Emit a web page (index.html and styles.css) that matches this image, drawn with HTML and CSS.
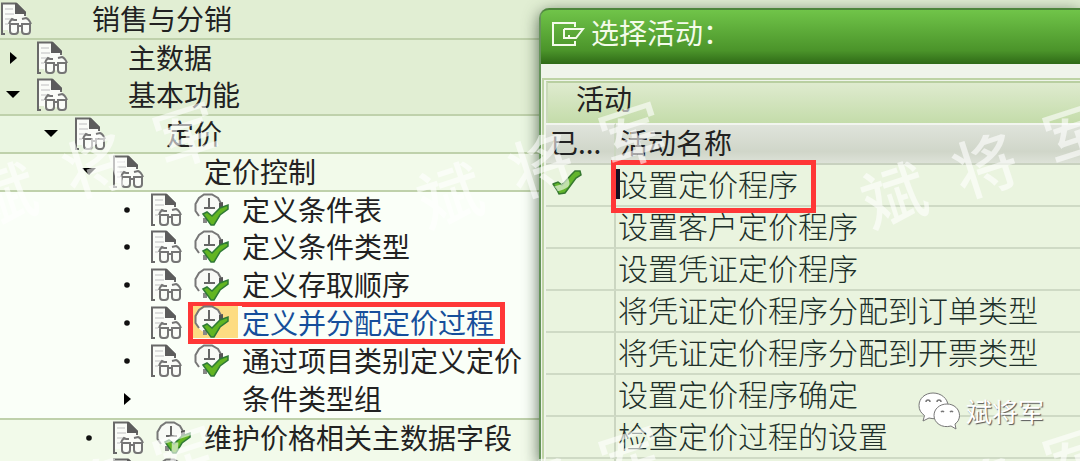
FILE: index.html
```html
<!DOCTYPE html>
<html lang="zh-CN">
<head>
<meta charset="utf-8">
<title>选择活动</title>
<link rel="stylesheet" href="styles.css">
</head>
<body>
<svg class="defs" aria-hidden="true">
  <symbol id="doc" viewBox="0 0 32 34">
    <path d="M2 1.500H16L25 11V28H2Z" fill="#fafcf8"/>
    <path d="M5 32H2V1.500H16L25 10.500V14" fill="none" stroke="#696969" stroke-width="2"/>
    <path d="M15 1V12H26V10L17 1Z" fill="#5c5c5c"/>
    <path d="M5 7H13M5 12H14M5 17H12M5 22H8" stroke="#d2d2d2" stroke-width="1.500"/>
    <path d="M9 21L14 15L20 18L26 14L31 20V31L27 33L20 29L11 33L8 29Z" fill="#fafcf8"/>
    <path d="M10 22V29Q10 32 13 32H15Q18 32 18 29V22ZM22 22H30V29Q30 32 27 32H25Q22 32 22 29ZM18 24H22M9 22Q10 19 12 17L14 18L17 18M22 17L26 16Q29 17 31 22" fill="none" stroke="#757575" stroke-width="2"/>
  </symbol>
  <symbol id="run" viewBox="0 0 36 34">
    <circle cx="15" cy="15" r="13" fill="#f8faf6"/>
    <path d="M5 23L1.500 18V11L5 5L10 1.500H18L24 5L28 12" fill="none" stroke="#777" stroke-width="2"/>
    <path d="M9 25H13V30H9Z" fill="#888"/>
    <path d="M15 5V15M10 15H21" stroke="#666" stroke-width="2"/>
    <path d="M25 10L29 9V15H25Z" fill="#555"/>
    <path d="M9 21L13 19L18 23L26 15L34 12L34 16L26 22L20 32H17Z" fill="#62b522" stroke="#2f7a36" stroke-width="1.500"/>
  </symbol>
  <symbol id="right" viewBox="0 0 14 14"><path d="M4 1L11 7L4 13Z" fill="#000"/></symbol>
  <symbol id="down" viewBox="0 0 14 14"><path d="M0 3H14L7 10Z" fill="#000"/></symbol>
  <symbol id="dot" viewBox="0 0 14 14"><circle cx="7" cy="7" r="2.800" fill="#111"/></symbol>
</svg>
<main class="screen">
  <ul class="tree">
    <li class="node root band-a"><svg class="doc"><use href="#doc"/></svg><span class="slot"></span><span>销售与分销</span></li>
    <li class="node band-a rule"><svg class="twisty"><use href="#right"/></svg><svg class="doc"><use href="#doc"/></svg><span class="slot"></span><span>主数据</span></li>
    <li class="node band-a"><svg class="twisty"><use href="#down"/></svg><svg class="doc"><use href="#doc"/></svg><span class="slot"></span><span>基本功能</span></li>
    <li class="node l2 band-b rule"><svg class="twisty"><use href="#down"/></svg><svg class="doc"><use href="#doc"/></svg><span class="slot"></span><span>定价</span></li>
    <li class="node l3 band-c rule"><svg class="twisty"><use href="#down"/></svg><svg class="doc"><use href="#doc"/></svg><span class="slot"></span><span>定价控制</span></li>
    <li class="node l4 rule"><svg class="twisty"><use href="#dot"/></svg><svg class="doc"><use href="#doc"/></svg><span class="slot"><svg class="run"><use href="#run"/></svg></span><span>定义条件表</span></li>
    <li class="node l4"><svg class="twisty"><use href="#dot"/></svg><svg class="doc"><use href="#doc"/></svg><span class="slot"><svg class="run"><use href="#run"/></svg></span><span>定义条件类型</span></li>
    <li class="node l4"><svg class="twisty"><use href="#dot"/></svg><svg class="doc"><use href="#doc"/></svg><span class="slot"><svg class="run"><use href="#run"/></svg></span><span>定义存取顺序</span></li>
    <li class="node l4"><svg class="twisty"><use href="#dot"/></svg><svg class="doc"><use href="#doc"/></svg><span class="marked"><span class="slot"><svg class="run"><use href="#run"/></svg></span><span>定义并分配定价过程</span></span></li>
    <li class="node l4"><svg class="twisty"><use href="#dot"/></svg><svg class="doc"><use href="#doc"/></svg><span class="slot"><svg class="run"><use href="#run"/></svg></span><span>通过项目类别定义定价</span></li>
    <li class="node l4"><svg class="twisty"><use href="#right"/></svg><span class="doc"></span><span class="slot"></span><span>条件类型组</span></li>
    <li class="node l3 band-c rule"><svg class="twisty"><use href="#dot"/></svg><svg class="doc"><use href="#doc"/></svg><span class="slot"><svg class="run"><use href="#run"/></svg></span><span>维护价格相关主数据字段</span></li>
    <li class="node l3 band-c"><svg class="twisty"><use href="#dot"/></svg><svg class="doc"><use href="#doc"/></svg><span class="slot"><svg class="run"><use href="#run"/></svg></span><span>定价协议价格</span></li>
  </ul>
  <section class="dialog" aria-labelledby="title">
    <header class="titlebar">
      <svg class="window-icon" viewBox="0 0 34 26"><path d="M24 6V2H2V24H24V20M13 8H32L25 17H18V14M13 8V17H19" fill="none" stroke="#f4fbea" stroke-width="2"/></svg>
      <h1 id="title">选择活动：</h1>
    </header>
    <div class="panel">
      <h2>活动</h2>
      <table>
        <thead><tr><th class="status" scope="col">已...</th><th scope="col">活动名称</th></tr></thead>
        <tbody>
          <tr><td class="status"><svg class="tick" viewBox="0 0 30 26"><path d="M1 14L6 12L10 15L19 5L23 1L28 1L29 5L24 8L13 23L7 24L5 20Z" fill="#62b52b" stroke="#35782f" stroke-width="1.500"/></svg></td><td><span class="chosen">设置定价程序</span></td></tr>
          <tr><td></td><td>设置客户定价程序</td></tr>
          <tr><td></td><td>设置凭证定价程序</td></tr>
          <tr><td></td><td>将凭证定价程序分配到订单类型</td></tr>
          <tr><td></td><td>将凭证定价程序分配到开票类型</td></tr>
          <tr><td></td><td>设置定价程序确定</td></tr>
          <tr><td></td><td>检查定价过程的设置</td></tr>
          <tr><td></td><td></td></tr>
        </tbody>
      </table>
    </div>
  </section>
  <div class="stamp s1" aria-hidden="true"><span>斌</span><span>将</span><span>军</span></div>
  <div class="stamp s2" aria-hidden="true"><span>斌</span><span>将</span><span>军</span></div>
  <div class="stamp s3" aria-hidden="true"><span>斌</span><span>将</span><span>军</span></div>
  <div class="stamp s4" aria-hidden="true"><span>斌</span><span>将</span><span>军</span></div>
  <div class="stamp s5" aria-hidden="true"><span>斌</span><span>将</span><span>军</span></div>
  <div class="stamp s6" aria-hidden="true"><span>斌</span><span>将</span><span>军</span></div>
  <div class="account">
    <svg class="wechat" viewBox="0 0 42 38">
      <g fill="#fff" stroke="#777" stroke-width="1">
        <path d="M15 1C7 1 1 6.500 1 13.500C1 18 3 21 6.500 23.500L5 29L11 26C22 29 30 22 30 14C30 6.500 23 1 15 1Z"/>
        <path d="M29 12C21.500 12 16 17 16 23.500C16 31 24 36.500 33 34L38 37L37 32C40 30 41.500 27 41.500 23.500C41.500 17 36 12 29 12Z"/>
      </g>
      <g fill="none" stroke="#777" stroke-width="1.500"><path d="M8 10a2 2 0 0 1 4 0M19 10a2 2 0 0 1 4 0M23 20a2 2 0 0 1 3 0M32 20a2 2 0 0 1 3 0"/></g>
    </svg>
    <span>斌将军</span>
  </div>
</main>
</body>
</html>
```
FILE: styles.css
```css
* { box-sizing: border-box; }
body {
  margin: 0;
  font-family: "Noto Sans CJK SC", sans-serif;
  font-size: 28px;
  font-weight: 400;
  color: #222;
}
.defs { position: absolute; width: 0; height: 0; }
.screen {
  position: relative;
  display: flex;
  height: 100vh;
  overflow: hidden;
  background: #e1eed3;
}
.tree {
  flex: 1;
  align-self: flex-start;
  margin: 0;
  padding: 0;
  list-style: none;
  background: #fafff8;
}
.node {
  display: flex;
  align-items: center;
  height: 38px;
  padding-left: 6px;
  line-height: 34px;
  white-space: nowrap;
}
.node > span:last-child { padding-bottom: 2px; }
.root { padding-left: 0; }
.l2 { padding-left: 44px; }
.l3 { padding-left: 82px; }
.l4 { padding-left: 120px; }
.band-a { background: #e1eed3; }
.band-b { background: #eaf6e1; }
.band-c { background: #f2faea; }
.rule { border-top: 2px solid #bfd1ab; }
.twisty { flex: none; width: 14px; height: 14px; margin-right: 16px; }
.doc { flex: none; width: 32px; height: 34px; margin-right: 10px; }
.slot { display: flex; align-items: center; flex: none; width: 50px; height: 34px; }
.run { width: 36px; height: 34px; margin-left: 2px; }
.marked {
  display: flex;
  align-items: center;
  height: 42px;
  margin-left: -4px;
  padding-right: 6px;
  border: 5px solid #ff3737;
  color: #164f9b;
}
.marked .slot { width: 49px; height: 32px; border-right: 4px solid #fafff8; background: #fddc82; }
.marked .run { margin-left: 1px; }

.dialog {
  flex: 1;
  z-index: 1;
  margin-top: 8px;
  border-left: 2px solid #65935a;
  border-radius: 10px 0 0 0;
  background: #eff4ea;
  box-shadow: 0 4px 16px rgba(40, 60, 40, .75);
}
.titlebar {
  display: flex;
  align-items: center;
  gap: 6px;
  height: 56px;
  padding: 0 10px 6px;
  border-top: 2px solid #4c853a;
  border-radius: 8px 0 0 0;
  background: linear-gradient(#70c449, #4b942a 75%, #2f6a17);
  color: #f4fbea;
}
.window-icon { width: 34px; height: 26px; }
h1, h2 { margin: 0; font-size: 28px; font-weight: 400; }
h1 { padding-bottom: 4px; line-height: 40px; }
.panel {
  margin: 14px 0 0 1px;
  border: solid #bdd3a4;
  border-width: 2px 0 0 2px;
  padding: 1px 0 0 2px;
}
h2 {
  height: 42px;
  padding-left: 28px;
  border-top: 2px solid #b9cfa1;
  border-left: 2px solid #c9dab8;
  background: linear-gradient(#dfebcf, #c4dcaa);
  line-height: 30px;
}
table { width: 100%; border-collapse: separate; border-spacing: 0; table-layout: fixed; }
th, td { height: 42px; padding: 0 0 4px 2px; text-align: left; line-height: 34px; font-weight: 400; white-space: nowrap; }
th { padding-left: 4px; border-top: 2px solid #f2f5ef; border-bottom: 2px solid #c8d1bf; background: linear-gradient(#dfe3db, #d0d6c9 70%, #dde2d8); }
td { border-bottom: 2px solid #cfdac5; background: #eaf4df; font-size: 30px; font-weight: 300; color: #20302a; }
th:first-child, td:first-child { width: 70px; border-right: 2px solid #cbd6c1; }
.tick { display: block; width: 30px; height: 26px; margin-left: 4px; }
.chosen { position: relative; }
.chosen::before {
  content: "";
  position: absolute;
  inset: -1px -18px -8px -7px;
  border: 5px solid #ff3737;
}
.chosen::after {
  content: "";
  position: absolute;
  left: -2px;
  top: 8px;
  width: 4px;
  height: 30px;
  background: #171022;
}
.stamp {
  position: absolute;
  z-index: 2;
  display: flex;
  gap: 32px;
  color: rgba(255, 255, 255, .6);
  font-size: 64px;
  font-weight: 500;
  line-height: 80px;
  transform: rotate(-18deg);
}
.s1 { left: -34px; top: 122px; }
.s2 { left: 412px; top: 122px; }
.s3 { left: 856px; top: 122px; }
.s4 { left: -34px; top: 446px; }
.s5 { left: 412px; top: 446px; }
.s6 { left: 856px; top: 446px; }
.account {
  position: absolute;
  z-index: 3;
  right: 36px;
  bottom: 30px;
  display: flex;
  align-items: center;
  gap: 6px;
  color: #fff;
  font-size: 26px;
  line-height: 40px;
  text-shadow: 1px 1px 1px #555;
}
.wechat { width: 42px; height: 38px; }
```
